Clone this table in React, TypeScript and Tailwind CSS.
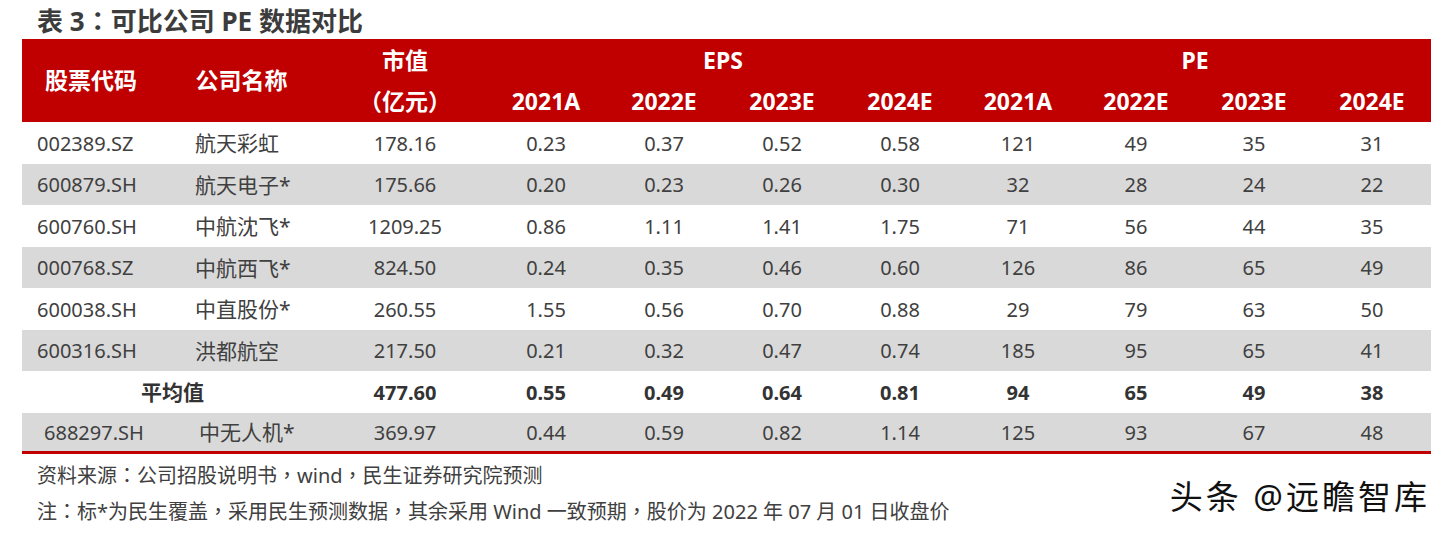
import React from "react";

const rows = [
  ["002389.SZ", "航天彩虹", "178.16", "0.23", "0.37", "0.52", "0.58", "121", "49", "35", "31"],
  ["600879.SH", "航天电子*", "175.66", "0.20", "0.23", "0.26", "0.30", "32", "28", "24", "22"],
  ["600760.SH", "中航沈飞*", "1209.25", "0.86", "1.11", "1.41", "1.75", "71", "56", "44", "35"],
  ["000768.SZ", "中航西飞*", "824.50", "0.24", "0.35", "0.46", "0.60", "126", "86", "65", "49"],
  ["600038.SH", "中直股份*", "260.55", "1.55", "0.56", "0.70", "0.88", "29", "79", "63", "50"],
  ["600316.SH", "洪都航空", "217.50", "0.21", "0.32", "0.47", "0.74", "185", "95", "65", "41"],
];

const avg = ["477.60", "0.55", "0.49", "0.64", "0.81", "94", "65", "49", "38"];
const last = ["688297.SH", "中无人机*", "369.97", "0.44", "0.59", "0.82", "1.14", "125", "93", "67", "48"];
const years = ["2021A", "2022E", "2023E", "2024E"];

const grid = "grid grid-cols-[138px_163px_164px_repeat(8,118px)]";

// full-width punctuation centred, like the original report font
function Punct({ text }: { text: string }) {
  return (
    <>
      {text.split(/([，：（）])/).map((part, i) =>
        /^[，：（）]$/.test(part) ? (
          <span key={i} className="font-['Noto_Sans_CJK_TC']">{part}</span>
        ) : (
          <React.Fragment key={i}>{part}</React.Fragment>
        )
      )}
    </>
  );
}

export default function App() {
  return (
    <div
      className="w-[1447px] h-[533px] bg-white text-[#404040] overflow-hidden"
      style={{ fontFamily: '"Noto Sans", "Noto Sans CJK SC", sans-serif' }}
    >
      <div className="pl-[37px] pt-[2px] h-[39px] text-[26px] font-bold leading-[36px] text-[#3c3c3c]">
        <Punct text="表 3：可比公司 PE 数据对比" />
      </div>

      <div className="ml-[22px] w-[1409px]">
        <div className={`${grid} grid-rows-[42px_41px] bg-[#c00000] text-white font-bold text-[23px]`}>
          <div className="row-span-2 flex items-center justify-center">股票代码</div>
          <div className="row-span-2 flex items-center justify-center">公司名称</div>
          <div className="flex items-center justify-center pt-[1px]">市值</div>
          <div className="col-span-4 flex items-center justify-center pt-[1px]">EPS</div>
          <div className="col-span-4 flex items-center justify-center pt-[1px]">PE</div>
          <div className="flex items-center justify-center"><Punct text="（亿元）" /></div>
          {[...years, ...years].map((y, i) => (
            <div key={i} className="flex items-center justify-center">{y}</div>
          ))}
        </div>

        {rows.map((r, i) => (
          <div
            key={r[0]}
            className={`${grid} h-[41.5px] text-[20px] pt-[2px] ${i % 2 === 1 ? "bg-[#d9d9d9]" : "bg-white"}`}
          >
            <div className="flex items-center pl-[15px]">{r[0]}</div>
            <div className="flex items-center pl-[35px] text-[21px]">{r[1]}</div>
            {r.slice(2).map((v, j) => (
              <div key={j} className="flex items-center justify-center">{v}</div>
            ))}
          </div>
        ))}

        <div className={`${grid} h-[41.5px] text-[20px] pt-[2px] font-bold bg-white text-[#333]`}>
          <div className="col-span-2 flex items-center justify-center text-[21px]">平均值</div>
          {avg.map((v, j) => (
            <div key={j} className="flex items-center justify-center">{v}</div>
          ))}
        </div>

        <div className={`${grid} h-[41.5px] text-[20px] pt-[2px] bg-[#d9d9d9] border-b-[3px] border-[#c00000]`}>
          <div className="flex items-center pl-[22px]">{last[0]}</div>
          <div className="flex items-center pl-[39px] text-[21px]">{last[1]}</div>
          {last.slice(2).map((v, j) => (
            <div key={j} className="flex items-center justify-center">{v}</div>
          ))}
        </div>
      </div>

      <div className="flex items-start justify-between pl-[37px] pr-[17px]">
        <div className="text-[20px] leading-[35px] pt-[3px] text-[#404040]">
          <div><Punct text="资料来源：公司招股说明书，wind，民生证券研究院预测" /></div>
          <div><Punct text="注：标*为民生覆盖，采用民生预测数据，其余采用 Wind 一致预期，股价为 2022 年 07 月 01 日收盘价" /></div>
        </div>
        <div className="pt-[22px] text-[33px] leading-[42px] text-[#111] tracking-[3px]">头条 @远瞻智库</div>
      </div>
    </div>
  );
}
